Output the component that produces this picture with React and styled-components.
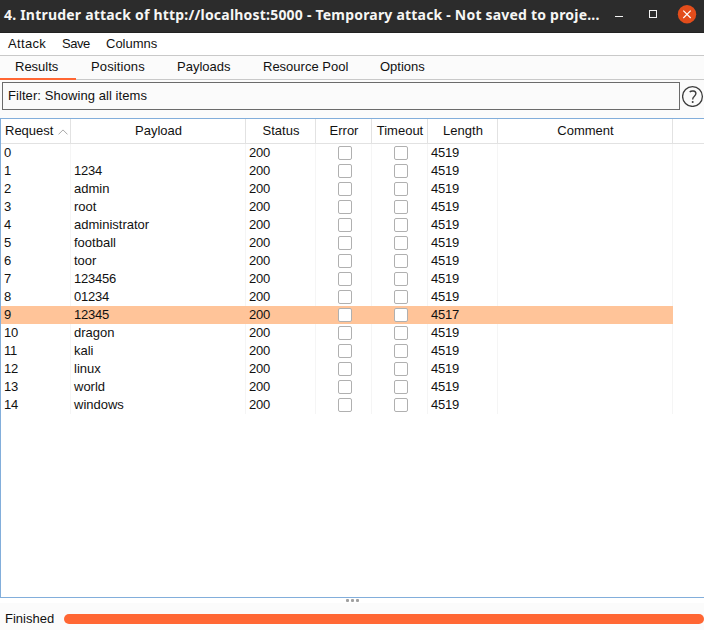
import React from 'react';
import styled, { createGlobalStyle } from 'styled-components';

const GlobalStyle = createGlobalStyle`
  * { box-sizing: border-box; }
  body {
    margin: 0;
    background: #fbfbfb;
    color: #111;
    font: 13px/18px "Liberation Sans", Arial, sans-serif;
    overflow: hidden;
  }
`;

const Window = styled.div`
  display: flex;
  flex-direction: column;
  width: 704px;
  height: 630px;
`;

const TitleBar = styled.header`
  display: flex;
  align-items: center;
  height: 33px;
  flex: none;
  padding: 0 6px 2px 4px;
  background: #2c2c2c;
  border-bottom: 1px solid #222;
  color: #f6f6f4;
`;

const Title = styled.div`
  flex: none;
  width: 610px;
  font: bold 14px/20px "Noto Sans", "Open Sans", sans-serif;
  letter-spacing: 0.205px;
  white-space: nowrap;
`;

const WindowControls = styled.svg`
  display: block;
  flex: none;
  margin-bottom: 1px;
`;

const MenuBar = styled.nav`
  display: flex;
  flex: none;
  height: 23px;
  padding: 2px 8px 0;
  background: #fff;
  border-bottom: 1px solid #c9c9c9;
`;

const MenuItem = styled.span`
  width: ${(p) => p.$width}px;
  letter-spacing: ${(p) => p.$tracking || 0}px;
`;

const TabBar = styled.nav`
  display: flex;
  flex: none;
  height: 24px;
  border-bottom: 1px solid #c9c9c9;
`;

const Tab = styled.div`
  flex: none;
  width: ${(p) => p.$width}px;
  height: 24px;
  padding: 2px 0 0 15px;
  letter-spacing: ${(p) => p.$tracking || 0}px;
  border-bottom: 2px solid ${(p) => (p.$active ? '#ff6633' : 'transparent')};
`;

const FilterBar = styled.div`
  display: flex;
  flex: none;
  height: 38px;
  padding: 2px 0 8px 2px;
  gap: 2px;
`;

const FilterBox = styled.div`
  width: 678px;
  height: 28px;
  padding: 4px 5px;
  border: 1px solid #6b6b6b;
  letter-spacing: 0.07px;
`;

const HelpIcon = styled.svg`
  display: block;
  flex: none;
  margin-top: 3px;
`;

const TablePanel = styled.section`
  flex: none;
  height: 480px;
  background: #fff;
  border: 1px solid #82aedb;
  border-right: 0;
`;

const columns = '70px 175px 70px 56px 56px 70px 175px 1fr';

const HeaderRow = styled.div`
  display: grid;
  grid-template-columns: ${columns};
  height: 25px;
  border-bottom: 1px solid #e2e2e2;
`;

const HeaderCell = styled.div`
  display: flex;
  justify-content: ${(p) => (p.$sorted ? 'flex-start' : 'center')};
  gap: 5px;
  padding: ${(p) => (p.$sorted ? '3px 0 0 4px' : '3px 0 0 1px')};
  white-space: nowrap;
  border-right: 1px solid #e2e2e2;
  &:last-child { border-right: 0; }
`;

const SortArrow = styled.svg`
  display: block;
  margin-top: 7px;
`;

const Row = styled.div`
  display: grid;
  grid-template-columns: ${columns};
  height: 18px;
`;

const Cell = styled.div`
  display: flex;
  justify-content: ${(p) => (p.$center ? 'center' : 'flex-start')};
  align-items: center;
  padding-left: 3px;
  letter-spacing: ${(p) => (p.$numeric ? '-0.23px' : 'normal')};
  background: ${(p) => (p.$highlight ? '#ffc499' : '#fff')};
  border-right: 1px solid ${(p) => (p.$highlight ? '#ffc499' : '#f5f5f5')};
`;

const Checkbox = styled.span`
  width: 14px;
  height: 14px;
  background: #fff;
  border: 1px solid #b0b0b0;
  border-radius: 2px;
`;

const SplitHandle = styled.div`
  display: flex;
  flex: none;
  justify-content: center;
  gap: 2px;
  height: 5px;
  padding-top: 1px;
  background: #fff;
`;

const Grip = styled.i`
  width: 3px;
  height: 3px;
  border-radius: 1px;
  background: #a0a0a0;
`;

const StatusBar = styled.footer`
  display: flex;
  flex: 1;
  align-items: flex-start;
  padding: 7px 0 0 5px;
`;

const StatusLabel = styled.span`
  width: 59px;
`;

const Progress = styled.div`
  flex: 1;
  height: 10px;
  margin-top: 4px;
  border-radius: 5px;
  background: #ff6633;
`;

const tabs = [
  ['Results', 76, 0],
  ['Positions', 86, 0.12],
  ['Payloads', 86, 0],
  ['Resource Pool', 117, 0],
  ['Options', 76, 0],
];

const headings = ['Payload', 'Status', 'Error', 'Timeout', 'Length', 'Comment', ''];

const payloads = [
  '', '1234', 'admin', 'root', 'administrator', 'football', 'toor', '123456',
  '01234', '12345', 'dragon', 'kali', 'linux', 'world', 'windows',
];

function ResultRow({ index, payload }) {
  const highlight = index === 9;
  return (
    <Row>
      <Cell $highlight={highlight} $numeric>{index}</Cell>
      <Cell $highlight={highlight} $numeric={/^\d+$/.test(payload)}>{payload}</Cell>
      <Cell $highlight={highlight} $numeric>200</Cell>
      <Cell $highlight={highlight} $center><Checkbox /></Cell>
      <Cell $highlight={highlight} $center><Checkbox /></Cell>
      <Cell $highlight={highlight} $numeric>{highlight ? 4517 : 4519}</Cell>
      <Cell $highlight={highlight} />
    </Row>
  );
}

export default function App() {
  return (
    <Window>
      <GlobalStyle />
      <TitleBar>
        <Title>4. Intruder attack of http://localhost:5000 - Temporary attack - Not saved to proje...</Title>
        <WindowControls width="84" height="20" viewBox="0 0 84 20" fill="none">
          <path d="M1 11.5H9" stroke="#f3f3f3" />
          <rect x="35.5" y="5.5" width="7" height="7" stroke="#f3f3f3" />
          <circle cx="73" cy="9.3" r="9.2" fill="#e34d1b" />
          <path d="M69.3 5.6l7.4 7.4m0-7.4l-7.4 7.4" stroke="#fff" strokeWidth="1.2" />
        </WindowControls>
      </TitleBar>
      <MenuBar>
        <MenuItem $width={54} $tracking={0.35}>Attack</MenuItem>
        <MenuItem $width={44} $tracking={-0.45}>Save</MenuItem>
        <MenuItem $width={60}>Columns</MenuItem>
      </MenuBar>
      <TabBar>
        {tabs.map(([name, width, tracking], i) => (
          <Tab key={name} $width={width} $tracking={tracking} $active={i === 0}>{name}</Tab>
        ))}
      </TabBar>
      <FilterBar>
        <FilterBox>Filter: Showing all items</FilterBox>
        <HelpIcon width="22" height="22" viewBox="0 0 22 22" fill="none" stroke="#3c3c3c">
          <circle cx="10.5" cy="11.5" r="9.9" strokeWidth="1.3" />
          <path d="M7.7 7.1c1.5-1.6 6.2-1.7 6.2 1.5 0 2.6-3.2 2.6-3.2 5.6v.4" strokeWidth="1.4" />
          <circle cx="10.7" cy="17" r="1" fill="#3c3c3c" stroke="none" />
        </HelpIcon>
      </FilterBar>
      <TablePanel>
        <HeaderRow>
          <HeaderCell $sorted>
            Request
            <SortArrow width="10" height="6" viewBox="0 0 10 6" fill="none" stroke="#a8a8a8">
              <path d="M.5 5.4L5 .9l4.5 4.5" />
            </SortArrow>
          </HeaderCell>
          {headings.map((h) => <HeaderCell key={h}>{h}</HeaderCell>)}
        </HeaderRow>
        {payloads.map((p, i) => <ResultRow key={i} index={i} payload={p} />)}
      </TablePanel>
      <SplitHandle><Grip /><Grip /><Grip /></SplitHandle>
      <StatusBar>
        <StatusLabel>Finished</StatusLabel>
        <Progress />
      </StatusBar>
    </Window>
  );
}
